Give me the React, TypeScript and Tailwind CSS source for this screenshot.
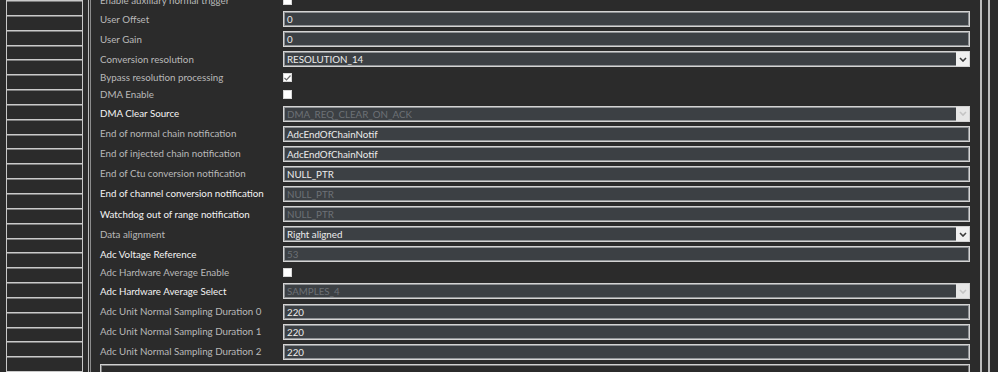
import React from 'react';

type Row = {
  label: string;
  kind: 'text' | 'check' | 'select';
  value?: string;
  checked?: boolean;
  disabled?: boolean;
  bright?: boolean;
};

const rows: Row[] = [
  { label: 'Enable auxiliary normal trigger', kind: 'check' },
  { label: 'User Offset', kind: 'text', value: '0' },
  { label: 'User Gain', kind: 'text', value: '0' },
  { label: 'Conversion resolution', kind: 'select', value: 'RESOLUTION_14' },
  { label: 'Bypass resolution processing', kind: 'check', checked: true },
  { label: 'DMA Enable', kind: 'check' },
  { label: 'DMA Clear Source', kind: 'select', value: 'DMA_REQ_CLEAR_ON_ACK', disabled: true, bright: true },
  { label: 'End of normal chain notification', kind: 'text', value: 'AdcEndOfChainNotif' },
  { label: 'End of injected chain notification', kind: 'text', value: 'AdcEndOfChainNotif' },
  { label: 'End of Ctu conversion notification', kind: 'text', value: 'NULL_PTR' },
  { label: 'End of channel conversion notification', kind: 'text', value: 'NULL_PTR', disabled: true, bright: true },
  { label: 'Watchdog out of range notification', kind: 'text', value: 'NULL_PTR', disabled: true, bright: true },
  { label: 'Data alignment', kind: 'select', value: 'Right aligned' },
  { label: 'Adc Voltage Reference', kind: 'text', value: '53', disabled: true, bright: true },
  { label: 'Adc Hardware Average Enable', kind: 'check' },
  { label: 'Adc Hardware Average Select', kind: 'select', value: 'SAMPLES_4', disabled: true, bright: true },
  { label: 'Adc Unit Normal Sampling Duration 0', kind: 'text', value: '220' },
  { label: 'Adc Unit Normal Sampling Duration 1', kind: 'text', value: '220' },
  { label: 'Adc Unit Normal Sampling Duration 2', kind: 'text', value: '220' },
];

const Chevron = ({ disabled }: { disabled?: boolean }) => (
  <svg width="8" height="5" viewBox="0 0 8 5">
    <path
      d="M1 1 L4 4 L7 1"
      fill="none"
      stroke={disabled ? '#c4c4c4' : '#3a3a3a'}
      strokeWidth="1.6"
    />
  </svg>
);

const Field = ({ row }: { row: Row }) => {
  if (row.kind === 'check') {
    return (
      <div className="h-[13px] flex items-center">
        <div className="w-[9px] h-[9px] bg-white border border-[#d8d8d8] flex items-center justify-center">
          {row.checked && (
            <svg width="7" height="6" viewBox="0 0 7 6">
              <path d="M0.5 3 L2.5 5 L6.5 0.5" fill="none" stroke="#6e6e6e" strokeWidth="1.2" />
            </svg>
          )}
        </div>
      </div>
    );
  }
  return (
    <div className="h-[16px] flex-1 flex bg-[#3c4044] border border-[#d4d4d4] shadow-[inset_0_0_0_1px_#8e9194]">
      <div
        className={`flex-1 pl-[3px] text-[9.75px] leading-[14px] ${
          row.disabled ? 'text-[#6d7176]' : 'text-[#ececec]'
        }`}
      >
        {row.value}
      </div>
      {row.kind === 'select' && (
        <div
          className={`w-[13px] flex items-center justify-center ${
            row.disabled ? 'bg-[#e6e6e6]' : 'bg-[#f0f0f0]'
          }`}
        >
          <Chevron disabled={row.disabled} />
        </div>
      )}
    </div>
  );
};

const App = () => {
  return (
    <div
      className="w-[998px] h-[372px] overflow-hidden bg-[#2b2b2b] flex"
      style={{ fontFamily: 'Lato, "Liberation Sans", Arial, sans-serif' }}
    >
      {/* tree column on the left */}
      <div className="w-[88px] shrink-0 pl-[6px]">
        <div className="w-[77px] h-full border-x border-[#c9c9c9] flex flex-col">
          {Array.from({ length: 26 }).map((_, i) => (
            <div
              key={i}
              className="h-[14.85px] shrink-0 border-t border-[#cacaca] shadow-[inset_0_1px_0_#7d7d7d]"
            />
          ))}
        </div>
      </div>
      <div className="w-[1px] bg-[#bcbcbc]" />
      <div className="w-[1px]" />
      <div className="w-[1px] bg-[#8c8c8c]" />

      {/* property grid */}
      <div className="flex-1 pl-[9px] pr-[10px] flex flex-col gap-[4.1px] -mt-[6px]">
        {rows.map((row) => (
          <div key={row.label} className="flex items-center shrink-0">
            <div
              className={`w-[183px] shrink-0 text-[9.75px] leading-[13px] whitespace-nowrap ${
                row.bright ? 'text-[#f4f4f4]' : 'text-[#b9b9b9]'
              }`}
            >
              {row.label}
            </div>
            <Field row={row} />
          </div>
        ))}
        <div className="h-[30px] shrink-0 border border-[#cfcfcf] shadow-[inset_0_0_0_1px_#7c7c7c]" />
      </div>

      {/* scroll frame on the right */}
      <div className="w-[2px] bg-[#bdbdbd]" />
      <div className="w-[6px]" />
      <div className="w-[2px] bg-[#bdbdbd]" />
      <div className="w-[8px]" />
    </div>
  );
};

export default App;
